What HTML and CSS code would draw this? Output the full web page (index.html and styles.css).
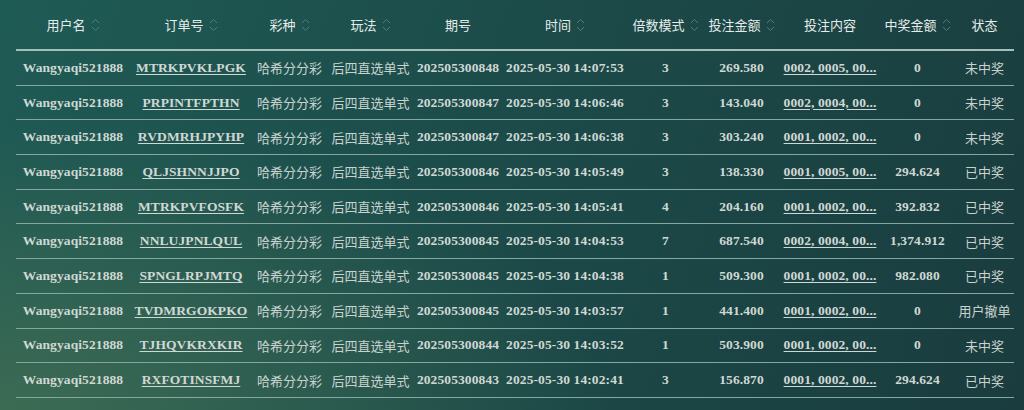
FILE: index.html
```html
<!DOCTYPE html>
<html>
<head>
    <title>投注记录</title>
    <meta name="viewport" content="width=device-width, initial-scale=1.0">
    <link rel="stylesheet" href="styles.css">
</head>
<body>
    <div class="wrap">
        <table class="bets">
            <colgroup>
                <col style="width:114px"><col style="width:122px"><col style="width:75px"><col style="width:87px">
                <col style="width:88px"><col style="width:126px"><col style="width:75px"><col style="width:77px">
                <col style="width:100px"><col style="width:75px"><col style="width:59px">
            </colgroup>
            <thead>
                <tr>
                    <th><span class="th">用户名<svg class="sort" viewBox="0 0 9 16"><path d="M1 6L4.5 2.5L8 6M1 10L4.5 13.5L8 10"/></svg></span></th>
                    <th><span class="th">订单号<svg class="sort" viewBox="0 0 9 16"><path d="M1 6L4.5 2.5L8 6M1 10L4.5 13.5L8 10"/></svg></span></th>
                    <th><span class="th">彩种<svg class="sort" viewBox="0 0 9 16"><path d="M1 6L4.5 2.5L8 6M1 10L4.5 13.5L8 10"/></svg></span></th>
                    <th><span class="th">玩法<svg class="sort" viewBox="0 0 9 16"><path d="M1 6L4.5 2.5L8 6M1 10L4.5 13.5L8 10"/></svg></span></th>
                    <th><span class="th">期号</span></th>
                    <th><span class="th">时间<svg class="sort" viewBox="0 0 9 16"><path d="M1 6L4.5 2.5L8 6M1 10L4.5 13.5L8 10"/></svg></span></th>
                    <th><span class="th">倍数模式<svg class="sort" viewBox="0 0 9 16"><path d="M1 6L4.5 2.5L8 6M1 10L4.5 13.5L8 10"/></svg></span></th>
                    <th><span class="th">投注金额<svg class="sort" viewBox="0 0 9 16"><path d="M1 6L4.5 2.5L8 6M1 10L4.5 13.5L8 10"/></svg></span></th>
                    <th><span class="th">投注内容</span></th>
                    <th><span class="th">中奖金额<svg class="sort" viewBox="0 0 9 16"><path d="M1 6L4.5 2.5L8 6M1 10L4.5 13.5L8 10"/></svg></span></th>
                    <th><span class="th">状态</span></th>
                </tr>
            </thead>
            <tbody>
                <tr><td>Wangyaqi521888</td><td><a href="#">MTRKPVKLPGK</a></td><td class="cn">哈希分分彩</td><td class="cn">后四直选单式</td><td>202505300848</td><td>2025-05-30 14:07:53</td><td>3</td><td>269.580</td><td><a href="#">0002, 0005, 00...</a></td><td>0</td><td class="cn">未中奖</td></tr>
                <tr><td>Wangyaqi521888</td><td><a href="#">PRPINTFPTHN</a></td><td class="cn">哈希分分彩</td><td class="cn">后四直选单式</td><td>202505300847</td><td>2025-05-30 14:06:46</td><td>3</td><td>143.040</td><td><a href="#">0002, 0004, 00...</a></td><td>0</td><td class="cn">未中奖</td></tr>
                <tr><td>Wangyaqi521888</td><td><a href="#">RVDMRHJPYHP</a></td><td class="cn">哈希分分彩</td><td class="cn">后四直选单式</td><td>202505300847</td><td>2025-05-30 14:06:38</td><td>3</td><td>303.240</td><td><a href="#">0001, 0002, 00...</a></td><td>0</td><td class="cn">未中奖</td></tr>
                <tr><td>Wangyaqi521888</td><td><a href="#">QLJSHNNJJPO</a></td><td class="cn">哈希分分彩</td><td class="cn">后四直选单式</td><td>202505300846</td><td>2025-05-30 14:05:49</td><td>3</td><td>138.330</td><td><a href="#">0001, 0005, 00...</a></td><td>294.624</td><td class="cn">已中奖</td></tr>
                <tr><td>Wangyaqi521888</td><td><a href="#">MTRKPVFOSFK</a></td><td class="cn">哈希分分彩</td><td class="cn">后四直选单式</td><td>202505300846</td><td>2025-05-30 14:05:41</td><td>4</td><td>204.160</td><td><a href="#">0001, 0002, 00...</a></td><td>392.832</td><td class="cn">已中奖</td></tr>
                <tr><td>Wangyaqi521888</td><td><a href="#">NNLUJPNLQUL</a></td><td class="cn">哈希分分彩</td><td class="cn">后四直选单式</td><td>202505300845</td><td>2025-05-30 14:04:53</td><td>7</td><td>687.540</td><td><a href="#">0002, 0004, 00...</a></td><td>1,374.912</td><td class="cn">已中奖</td></tr>
                <tr><td>Wangyaqi521888</td><td><a href="#">SPNGLRPJMTQ</a></td><td class="cn">哈希分分彩</td><td class="cn">后四直选单式</td><td>202505300845</td><td>2025-05-30 14:04:38</td><td>1</td><td>509.300</td><td><a href="#">0001, 0002, 00...</a></td><td>982.080</td><td class="cn">已中奖</td></tr>
                <tr><td>Wangyaqi521888</td><td><a href="#">TVDMRGOKPKO</a></td><td class="cn">哈希分分彩</td><td class="cn">后四直选单式</td><td>202505300845</td><td>2025-05-30 14:03:57</td><td>1</td><td>441.400</td><td><a href="#">0001, 0002, 00...</a></td><td>0</td><td class="cn">用户撤单</td></tr>
                <tr><td>Wangyaqi521888</td><td><a href="#">TJHQVKRXKIR</a></td><td class="cn">哈希分分彩</td><td class="cn">后四直选单式</td><td>202505300844</td><td>2025-05-30 14:03:52</td><td>1</td><td>503.900</td><td><a href="#">0001, 0002, 00...</a></td><td>0</td><td class="cn">未中奖</td></tr>
                <tr><td>Wangyaqi521888</td><td><a href="#">RXFOTINSFMJ</a></td><td class="cn">哈希分分彩</td><td class="cn">后四直选单式</td><td>202505300843</td><td>2025-05-30 14:02:41</td><td>3</td><td>156.870</td><td><a href="#">0001, 0002, 00...</a></td><td>294.624</td><td class="cn">已中奖</td></tr>
            </tbody>
        </table>
    </div>
</body>
</html>
```

FILE: styles.css
```css
html, body {
    margin: 0;
    height: 100%;
}
body {
    background:
        radial-gradient(ellipse 60% 70% at 0% 100%, rgba(68, 112, 84, 0.8), rgba(68, 112, 84, 0) 100%),
        linear-gradient(110deg, #1f5b55 0%, #1c4c4a 45%, #1a3c3e 100%);
    color: #d0d8d4;
    overflow: hidden;
}
.wrap {
    padding: 0 10px 0 16px;
}
.bets {
    width: 998px;
    table-layout: fixed;
    border-collapse: collapse;
}
.bets th {
    height: 49px;
    padding: 0;
    border-bottom: 2px solid #a4bfba;
    font-family: "Noto Sans CJK SC", "Noto Sans", sans-serif;
    font-size: 13px;
    font-weight: normal;
    color: #e6ecea;
    text-align: center;
    white-space: nowrap;
}
.th {
    display: inline-flex;
    align-items: center;
    gap: 5px;
}
.sort {
    width: 9px;
    height: 16px;
    fill: none;
    stroke: #517c78;
    stroke-width: 1;
}
.bets td {
    height: 33.7px;
    padding: 0;
    border-bottom: 1px solid #86a6a0;
    font-family: "Liberation Serif", "Noto Sans CJK SC", serif;
    font-size: 13.5px;
    font-weight: bold;
    letter-spacing: 0.1px;
    text-align: center;
    white-space: nowrap;
    overflow: hidden;
}
.bets td.cn {
    font-family: "Noto Sans CJK SC", "Noto Sans", sans-serif;
    font-size: 13px;
    font-weight: normal;
    letter-spacing: 0;
    color: #c9d2ce;
}
.bets a {
    color: #d0d8d4;
    text-decoration: underline;
    text-underline-offset: 2px;
}
```
